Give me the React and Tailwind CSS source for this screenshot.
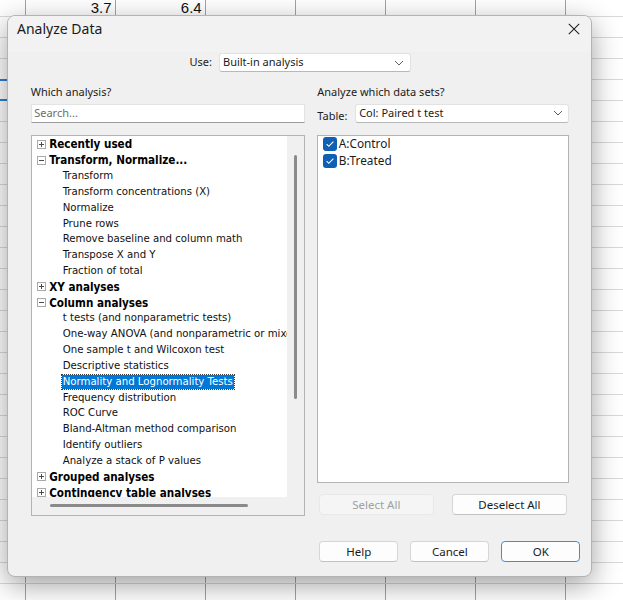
import React from "react";

const UI = "font-['Noto_Sans','Liberation_Sans',sans-serif]";
const TREE = "font-['DejaVu_Sans_Condensed','DejaVu_Sans',sans-serif]";

const SHEET_ROWS = 29;
const SHEET_COLS = 7;

const TREE_ITEMS = [
  { kind: "group", label: "Recently used", open: false },
  { kind: "group", label: "Transform, Normalize...", open: true },
  { kind: "item", label: "Transform" },
  { kind: "item", label: "Transform concentrations (X)" },
  { kind: "item", label: "Normalize" },
  { kind: "item", label: "Prune rows" },
  { kind: "item", label: "Remove baseline and column math" },
  { kind: "item", label: "Transpose X and Y" },
  { kind: "item", label: "Fraction of total" },
  { kind: "group", label: "XY analyses", open: false },
  { kind: "group", label: "Column analyses", open: true },
  { kind: "item", label: "t tests (and nonparametric tests)" },
  { kind: "item", label: "One-way ANOVA (and nonparametric or mixed)" },
  { kind: "item", label: "One sample t and Wilcoxon test" },
  { kind: "item", label: "Descriptive statistics" },
  { kind: "item", label: "Normality and Lognormality Tests", selected: true },
  { kind: "item", label: "Frequency distribution" },
  { kind: "item", label: "ROC Curve" },
  { kind: "item", label: "Bland-Altman method comparison" },
  { kind: "item", label: "Identify outliers" },
  { kind: "item", label: "Analyze a stack of P values" },
  { kind: "group", label: "Grouped analyses", open: false },
  { kind: "group", label: "Contingency table analyses", open: false },
];

function Sheet() {
  const rows = Array.from({ length: SHEET_ROWS });
  return (
    <div className="flex flex-col bg-white">
      {rows.map((_, r) => (
        <div
          key={r}
          className={
            "flex shrink-0 border-b border-[#d9d9d9] " +
            (r === 0 ? "h-[17px]" : "h-[21.03px]")
          }
        >
          <div className="relative w-[25.5px] shrink-0 border-r border-[#a3a3a3]">
            {r === 4 && (
              <div className="absolute inset-x-0 -top-[1px] -bottom-[1px] border-y-2 border-[#2f7fd6]" />
            )}
          </div>
          {Array.from({ length: SHEET_COLS }).map((__, c) => (
            <div
              key={c}
              className="flex w-[90.1px] shrink-0 items-end justify-end border-r border-[#a3a3a3] pr-[3px] font-['Liberation_Sans',sans-serif] text-[15px] leading-[17px] text-[#111]"
            >
              {r === 0 && c === 0 && "3.7"}
              {r === 0 && c === 1 && "6.4"}
            </div>
          ))}
        </div>
      ))}
    </div>
  );
}

function Chevron() {
  return (
    <svg width="10" height="6" viewBox="0 0 10 6" className="shrink-0">
      <path d="M1 1l4 4 4-4" fill="none" stroke="#5f5f5f" strokeWidth="1" />
    </svg>
  );
}

function Combo({ text, className }) {
  return (
    <div
      className={
        "flex items-center rounded-[3px] border border-[#e2e2e2] border-b-[#b8b8b8] bg-white " +
        className
      }
    >
      <span className="flex-1 truncate text-[11px] text-[#1b1b1b]">{text}</span>
      <Chevron />
    </div>
  );
}

function Expander({ open }) {
  return (
    <svg width="9" height="9" viewBox="0 0 9 9" className="ml-[5px] shrink-0">
      <rect x="0.5" y="0.5" width="8" height="8" fill="#fff" stroke="#a9a9a9" />
      <path d="M2 4.5h5" stroke="#4a4a4a" strokeWidth="1" />
      {!open && <path d="M4.5 2v5" stroke="#4a4a4a" strokeWidth="1" />}
    </svg>
  );
}

function TreeRow({ item }) {
  if (item.kind === "group") {
    return (
      <div className="flex h-[15.83px] items-center whitespace-nowrap pt-[1px]">
        <Expander open={item.open} />
        <span className="ml-[3.5px] text-[11.6px] font-bold leading-[14px] text-black">{item.label}</span>
      </div>
    );
  }
  return (
    <div className="flex h-[15.83px] items-center whitespace-nowrap pl-[30px] pt-[1px]">
      <span
        className={
          "px-[1px] text-[11.3px] leading-[14px] " +
          (item.selected
            ? "bg-[#0078d7] text-white outline outline-1 outline-dotted outline-[#3d3d3d]"
            : "text-[#111]")
        }
      >
        {item.label}
      </span>
    </div>
  );
}

function AnalysisTree() {
  return (
    <div className="grid h-[381px] grid-cols-[1fr_17px] grid-rows-[1fr_18px] border border-[#b4b4b4] bg-[#f0f0f0]">
      <div className={"overflow-hidden bg-white " + TREE}>
        {TREE_ITEMS.map((it, i) => (
          <TreeRow key={i} item={it} />
        ))}
      </div>
      <div className="flex justify-start pl-[7px] pt-[19px]">
        <div className="h-[244px] w-[3px] rounded-full bg-[#8a8a8a]" />
      </div>
      <div className="flex items-start pl-[18.3px] pt-[7.5px]">
        <div className="h-[3px] w-[198px] rounded-full bg-[#8a8a8a]" />
      </div>
      <div />
    </div>
  );
}

function CheckBox() {
  return (
    <svg width="14" height="14" viewBox="0 0 14 14" className="shrink-0">
      <rect x="0" y="0" width="14" height="14" rx="3" fill="#0f5fb5" />
      <path d="M3.6 7.2l2.2 2.1 4.6-4.6" fill="none" stroke="#ffffff" strokeWidth="1.1" />
    </svg>
  );
}

function Button({ children, disabled, primary, className }) {
  return (
    <div
      className={
        "flex h-[21px] items-center justify-center rounded-[4px] border text-[11.5px] " +
        (disabled
          ? "border-[#e8e8e8] bg-[#f5f5f5] text-[#a0a0a0] "
          : primary
          ? "border-[#3f8fd8] bg-[#fdfdfd] text-[#1b1b1b] "
          : "border-[#d6d6d6] border-b-[#c2c2c2] bg-[#fdfdfd] text-[#1b1b1b] ") +
        className
      }
    >
      {children}
    </div>
  );
}

function Dialog() {
  return (
    <div
      className={
        "absolute left-[7px] top-[15px] flex h-[562px] w-[585px] flex-col overflow-hidden rounded-[8px] border border-[#b3b3b3] bg-[#f0f0f0] shadow-[0_8px_28px_rgba(0,0,0,0.38)] " +
        UI
      }
    >
      {/* title bar */}
      <div className="flex h-[36px] shrink-0 items-start justify-between bg-[#f2f2f2] pl-[9px] pr-[11px] pt-[2.5px]">
        <span className="text-[14px] leading-[19px] text-[#1a1a1a]">Analyze Data</span>
        <svg width="12" height="12" viewBox="0 0 12 12" className="mt-[4px]">
          <path d="M0.8 0.8l10.4 10.4M11.2 0.8L0.8 11.2" stroke="#222" strokeWidth="1.1" />
        </svg>
      </div>

      {/* body */}
      <div className="flex flex-col pl-[22.7px] pr-[22.3px]">
        <div className="mt-[1.2px] flex h-[19px] items-center">
          <div className="w-[188.3px] pr-[7px] text-right text-[11px] text-[#1b1b1b]">Use:</div>
          <Combo text="Built-in analysis" className="h-[19px] w-[192px] pl-[3px] pr-[6px]" />
        </div>

        <div className="mt-[11.8px] flex">
          {/* left column */}
          <div className="flex w-[274.3px] shrink-0 flex-col">
            <div className="h-[16px] text-[11px] leading-[16px] text-[#1b1b1b]">Which analysis?</div>
            <div className="mt-[4px] flex h-[19.3px] items-center border border-[#e3e3e3] border-b-[#9d9d9d] bg-white pl-[2.5px] text-[11px] text-[#6d6d6d]">
              Search...
            </div>
            <div className="mt-[11.7px]">
              <AnalysisTree />
            </div>
          </div>

          {/* right column */}
          <div className="ml-[12.3px] flex w-[251.4px] shrink-0 flex-col">
            <div className="h-[16px] text-[11px] leading-[16px] text-[#1b1b1b]">Analyze which data sets?</div>
            <div className="mt-[4.3px] flex h-[18.4px] items-end">
              <span className="text-[11px] leading-[14px] text-[#1b1b1b]">Table:</span>
              <Combo text="Col: Paired t test" className="ml-auto h-[18.4px] w-[214px] self-start pl-[3.5px] pr-[5px]" />
            </div>
            <div className="mt-[12.3px] flex h-[348.3px] flex-col border border-[#b4b4b4] bg-white pl-[5px] pt-[1px]">
              {["A:Control", "B:Treated"].map((t) => (
                <div key={t} className="flex h-[17.3px] items-start">
                  <CheckBox />
                  <span className="ml-[1.5px] text-[11.8px] leading-[13px] text-[#1b1b1b]">{t}</span>
                </div>
              ))}
            </div>
            <div className="mt-[10.7px] flex justify-between px-[1.5px]">
              <Button disabled className="w-[115px]">Select All</Button>
              <Button className="w-[115.5px]">Deselect All</Button>
            </div>
          </div>
        </div>
      </div>

      <div className="mt-[25.5px] flex justify-end gap-[12px] pr-[10.7px]">
        <Button className="w-[79px]">Help</Button>
        <Button className="w-[79px]">Cancel</Button>
        <Button primary className="w-[79px]">OK</Button>
      </div>
    </div>
  );
}

export default function App() {
  return (
    <div className="relative h-[600px] w-[623px] overflow-hidden bg-white">
      <Sheet />
      <Dialog />
    </div>
  );
}
